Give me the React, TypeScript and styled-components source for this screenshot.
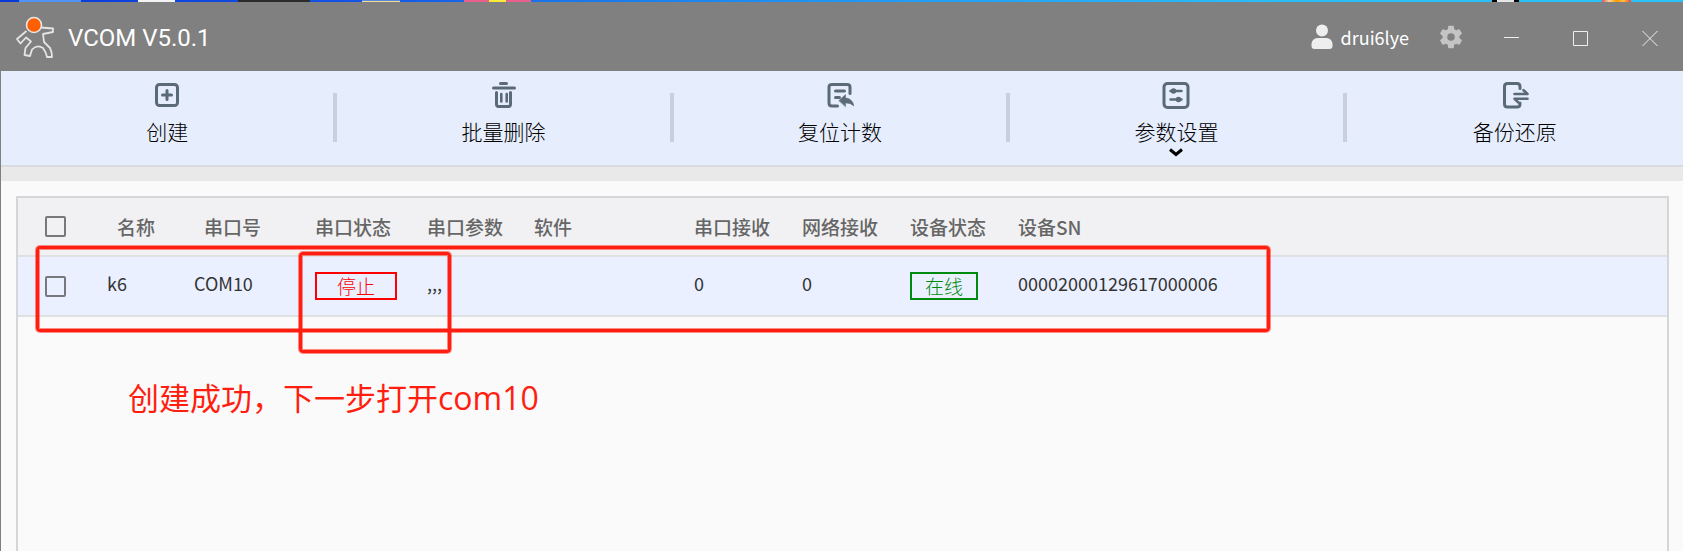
import React from 'react';
import styled, { createGlobalStyle } from 'styled-components';

const cjk = '"Noto Sans CJK SC", sans-serif';

const GlobalStyle = createGlobalStyle`
  * { box-sizing: border-box; }
  html, body, #root { height: 100%; }
  body { margin: 0; background: #fafafa; font-family: ${cjk}; color: #333; overflow: hidden; }
  button { font: inherit; color: inherit; border: 0; padding: 0; background: none; cursor: pointer; }
`;

const Shell = styled.div`
  display: flex;
  flex-direction: column;
  height: 100%;
`;

const Desktop = styled.div`
  flex: none;
  display: flex;
  height: 2px;
  background: linear-gradient(90deg, #0a37d8 0%, #1555e6 22%, #1a73ea 32%, #2196f3 50%, #29bdf8 75%, #29c3fa 100%);
`;

const Patch = styled.i<{ $gap: number; $w: number; $fill: string }>`
  flex: none;
  margin-left: ${(p) => p.$gap}px;
  width: ${(p) => p.$w}px;
  background: ${(p) => p.$fill};
`;

const Window = styled.div`
  flex: 1;
  min-height: 0;
  display: flex;
  flex-direction: column;
  border-left: 1px solid #808080;
  background: #fafafa;
`;

const TitleBar = styled.header`
  flex: none;
  display: flex;
  align-items: center;
  height: 69px;
  padding: 0 17px 0 14px;
  background: #808080;
  color: #fff;
`;

const Title = styled.h1`
  flex: 1;
  margin: 0 0 0 13px;
  padding-top: 2px;
  font: 400 24px/32px Roboto, sans-serif;
`;

const User = styled.button`
  display: flex;
  align-items: center;
  gap: 8px;
  font-size: 18px;
  line-height: 28px;
  margin-right: 28px;
`;

const WindowButtons = styled.div`
  display: flex;
  gap: 37px;
  margin-left: 31px;
`;

const IconButton = styled.button`
  display: flex;
  align-items: center;
  justify-content: center;
`;

const WindowButton = styled(IconButton)`
  width: 32px;
  height: 32px;
  padding-top: 2px;
`;

const Toolbar = styled.nav`
  flex: none;
  display: flex;
  height: 96px;
  background: #e6edfd;
  border-bottom: 2px solid #dadbde;
`;

const Tool = styled.button`
  position: relative;
  flex: 1 1 20%;
  display: flex;
  flex-direction: column;
  align-items: center;
  padding-top: 10px;
  font-size: 21px;
  font-weight: 300;
  line-height: 28px;
  color: #000;

  svg { display: block; }

  &:not(:last-child) { padding-right: 4px; }

  &:not(:last-child)::after {
    content: '';
    position: absolute;
    right: 0;
    top: 22px;
    width: 4px;
    height: 49px;
    background: #cacfdf;
  }
`;

const ToolLabel = styled.span`
  margin: 8px 0 3px;
`;

const Band = styled.div`
  flex: none;
  height: 14px;
  background: #e9e9e9;
`;

const Panel = styled.main`
  position: relative;
  flex: 1;
  min-height: 0;
  margin: 15px 14px 0 15px;
  border: 2px solid #d5d6d8;
  border-bottom: 0;
`;

const Table = styled.table`
  width: 100%;
  table-layout: fixed;
  border-collapse: separate;
  border-spacing: 0;
  text-align: left;
`;

const Head = styled.th<{ $indent?: boolean }>`
  height: 59px;
  padding: 0 0 0 ${(p) => (p.$indent ? 10 : 0)}px;
  background: #f1f1f3;
  border-bottom: 2px solid #dfe0e2;
  font-size: 19px;
  line-height: 28px;
  font-weight: 500;
  color: #666;
  white-space: nowrap;
`;

const Cell = styled.td`
  height: 60px;
  padding: 0;
  background: #eaf0ff;
  border-bottom: 2px solid #dfe0e2;
  font-size: 18px;
  line-height: 28px;
  white-space: nowrap;
`;

const Value = styled.span`
  display: block;
  padding-bottom: 6px;
`;

const CheckBox = styled.input`
  display: block;
  appearance: none;
  width: 21px;
  height: 21px;
  margin: 0 0 0 27px;
  border: 2px solid #77787c;
  border-radius: 2px;
`;

const State = styled.button<{ $color: string; $w: number }>`
  display: block;
  width: ${(p) => p.$w}px;
  height: 28px;
  border: 2px solid ${(p) => p.$color};
  color: ${(p) => p.$color};
  font-size: 19px;
  font-weight: 300;
  line-height: 24px;
  text-align: center;
`;

const Marker = styled.div<{ $x: number; $y: number; $w: number; $h: number }>`
  position: absolute;
  left: ${(p) => p.$x}px;
  top: ${(p) => p.$y}px;
  width: ${(p) => p.$w}px;
  height: ${(p) => p.$h}px;
  border: 3px solid #ff1e10;
  border-radius: 4px;
  box-shadow: 0 0 0 1px rgba(255, 30, 16, 0.5), inset 0 0 0 1px rgba(255, 30, 16, 0.5);
  pointer-events: none;
`;

const Note = styled.p`
  position: absolute;
  left: 110px;
  top: 178px;
  margin: 0;
  color: #ff1e10;
  font: 400 31px/44px "Open Sans", ${cjk};
  white-space: nowrap;
`;

const PortName = styled.span`
  font-size: 32px;
`;

const Logo = () => (
  <svg width="40" height="43" viewBox="0 0 40 43" fill="none" aria-hidden="true">
    <path d="M11.5 16 L2 24 L5.5 28.5 L11 22.5 L16 26.5 L10.5 33 L9.5 40 L15 41 L17 34.5 Q22 29 28 33 Q31 37 32 42 L37 42 Q37 37 35 33 L29 27 L28 19 L38 17 L38 13.5 L26 12.5" stroke="#e4e4e4" strokeWidth="1.8" strokeLinejoin="round" />
    <circle cx="19" cy="10" r="7.5" fill="#ff5f00" stroke="#e8e8e8" strokeWidth="1.6" />
  </svg>
);

const UserIcon = () => (
  <svg width="22" height="26" viewBox="0 0 22 26" fill="#eee" aria-hidden="true">
    <circle cx="11" cy="6.5" r="6" />
    <path d="M0.5 22v-2a6 6 0 0 1 6-6h9a6 6 0 0 1 6 6v2a3 3 0 0 1-3 3h-15a3 3 0 0 1-3-3Z" />
  </svg>
);

const GearIcon = () => (
  <svg width="28" height="28" viewBox="0 0 24 24" fill="#c4c4c4" aria-hidden="true">
    <path d="M19.14 12.94c.04-.3.06-.61.06-.94 0-.32-.02-.64-.07-.94l2.03-1.58a.49.49 0 0 0 .12-.61l-1.92-3.32a.488.488 0 0 0-.59-.22l-2.39.96c-.5-.38-1.03-.7-1.62-.94l-.36-2.54a.484.484 0 0 0-.48-.41h-3.84c-.24 0-.43.17-.47.41l-.36 2.54c-.59.24-1.13.57-1.62.94l-2.39-.96c-.22-.08-.47 0-.59.22L2.74 8.87c-.12.21-.08.47.12.61l2.03 1.58c-.05.3-.09.63-.09.94s.02.64.07.94l-2.03 1.58a.49.49 0 0 0-.12.61l1.92 3.32c.12.22.37.29.59.22l2.39-.96c.5.38 1.03.7 1.62.94l.36 2.54c.05.24.24.41.48.41h3.84c.24 0 .44-.17.47-.41l.36-2.54c.59-.24 1.13-.56 1.62-.94l2.39.96c.22.08.47 0 .59-.22l1.92-3.32c.12-.22.07-.47-.12-.61l-2.01-1.58zM12 15.2A3.2 3.2 0 1 1 12 8.8a3.2 3.2 0 0 1 0 6.4z" />
  </svg>
);

const LineIcon = ({ d }: { d: string }) => (
  <svg width="16" height="16" viewBox="0 0 16 16" fill="none" stroke="#eee" aria-hidden="true">
    <path d={d} />
  </svg>
);

const ToolIcon = ({ children }: { children: React.ReactNode }) => (
  <svg width="28" height="28" viewBox="0 0 28 28" fill="none" stroke="#5b6b75" strokeWidth="3" strokeLinecap="round" strokeLinejoin="round" aria-hidden="true">
    {children}
  </svg>
);

const tools = [
  {
    label: '创建',
    icon: <><rect x="3.5" y="3.5" width="21" height="21" rx="3" /><path d="M14 9.5v9M9.5 14h9" /></>,
  },
  {
    label: '批量删除',
    icon: (
      <>
        <path d="M10.5 2.5h6M3.5 7h21" />
        <path d="M6.5 11.500v11.500q0 2.500 2 2.500h10q2 0 2-2.500v-11.500" />
        <path d="M11.3 13v7.5M16.7 13v7.5" strokeWidth="2.6" />
      </>
    ),
  },
  {
    label: '复位计数',
    icon: (
      <>
        <path d="M11.5 25H6q-3 0-3-3V6q0-2.5 3-2.5h15q3 0 3 2.5v6.5" />
        <path d="M9.5 10h9M9.5 16.5h4" />
        <path d="M13 19.5l6.5-6v3.5q6.500 0 8.500 8-4-3.500-8.500-3v3.500z" fill="#5b6b75" strokeWidth="0.5" />
      </>
    ),
  },
  {
    label: '参数设置',
    menu: true,
    icon: (
      <>
        <rect x="2" y="2.5" width="24" height="24" rx="3.5" />
        <path d="M8.5 10h11M8.5 18.5h11" strokeWidth="2.5" />
        <circle cx="11.5" cy="10" r="1.8" strokeWidth="2" />
        <circle cx="16.5" cy="18.5" r="1.8" strokeWidth="2" />
      </>
    ),
  },
  {
    label: '备份还原',
    icon: (
      <>
        <path d="M19 7.5V5.500q0-3-3-3H6.500q-3 0-3 3v17.500q0 3 3 3H16q3 0 3-3v-1" />
        <path d="M13.500 13h13l-4-3.800M26.500 17.800h-13l4 3.800" strokeWidth="2.6" />
      </>
    ),
  },
];

const columns = [
  { title: '名称', width: 87, indent: true },
  { title: '串口号', width: 121, indent: true },
  { title: '串口状态', width: 112 },
  { title: '串口参数', width: 107 },
  { title: '软件', width: 160 },
  { title: '串口接收', width: 108 },
  { title: '网络接收', width: 108 },
  { title: '设备状态', width: 108 },
  { title: '设备SN' },
];

export default function App() {
  return (
    <>
      <GlobalStyle />
      <Shell>
        <Desktop>
          <Patch $gap={19} $w={62} $fill="#4f93f5" />
          <Patch $gap={57} $w={37} $fill="#f4f4f4" />
          <Patch $gap={63} $w={72} $fill="#2b2b2b" />
          <Patch $gap={52} $w={38} $fill="linear-gradient(#5c86d8 50%, #f0dca0 50%)" />
          <Patch $gap={64} $w={25} $fill="#e8608c" />
          <Patch $gap={0} $w={17} $fill="#fbec3c" />
          <Patch $gap={0} $w={25} $fill="#e8608c" />
          <Patch $gap={961} $w={5} $fill="#000" />
          <Patch $gap={0} $w={17} $fill="#e6e6e6" />
          <Patch $gap={0} $w={5} $fill="#000" />
          <Patch $gap={83} $w={29} $fill="linear-gradient(90deg, #e8504c, #f9d8a0, #ff9800, #ffc040, #ee4040)" />
        </Desktop>
        <Window>
          <TitleBar>
            <Logo />
            <Title>VCOM V5.0.1</Title>
            <User type="button"><UserIcon />drui6lye</User>
            <IconButton type="button" aria-label="设置"><GearIcon /></IconButton>
            <WindowButtons>
              <WindowButton type="button" aria-label="最小化"><LineIcon d="M0 7.5h15" /></WindowButton>
              <WindowButton type="button" aria-label="最大化"><LineIcon d="M0.5 1.5h14v14h-14z" /></WindowButton>
              <WindowButton type="button" aria-label="关闭"><LineIcon d="M0.5 1l15 15M15.5 1l-15 15" /></WindowButton>
            </WindowButtons>
          </TitleBar>
          <Toolbar>
            {tools.map((t) => (
              <Tool key={t.label} type="button">
                <ToolIcon>{t.icon}</ToolIcon>
                <ToolLabel>{t.label}</ToolLabel>
                {t.menu && (
                  <svg width="14" height="10" viewBox="0 0 14 10" fill="none" stroke="#000" strokeWidth="3" aria-hidden="true">
                    <path d="M1 1.5l6 5 6-5" />
                  </svg>
                )}
              </Tool>
            ))}
          </Toolbar>
          <Band />
          <Panel>
            <Table>
              <colgroup>
                <col style={{ width: 89 }} />
                {columns.map((c) => <col key={c.title} style={{ width: c.width }} />)}
              </colgroup>
              <thead>
                <tr>
                  <Head><CheckBox type="checkbox" aria-label="全选" /></Head>
                  {columns.map((c) => <Head key={c.title} $indent={c.indent}>{c.title}</Head>)}
                </tr>
              </thead>
              <tbody>
                <tr>
                  <Cell><CheckBox type="checkbox" aria-label="k6" /></Cell>
                  <Cell><Value>k6</Value></Cell>
                  <Cell><Value>COM10</Value></Cell>
                  <Cell><State type="button" $color="#ff0000" $w={82}>停止</State></Cell>
                  <Cell><Value>,,,</Value></Cell>
                  <Cell />
                  <Cell><Value>0</Value></Cell>
                  <Cell><Value>0</Value></Cell>
                  <Cell><State type="button" $color="#008a10" $w={68}>在线</State></Cell>
                  <Cell><Value>00002000129617000006</Value></Cell>
                </tr>
              </tbody>
            </Table>
            <Marker $x={18} $y={48} $w={1234} $h={86} />
            <Marker $x={281} $y={54} $w={152} $h={101} />
            <Note>创建成功，下一步打开<PortName>com10</PortName></Note>
          </Panel>
        </Window>
      </Shell>
    </>
  );
}
